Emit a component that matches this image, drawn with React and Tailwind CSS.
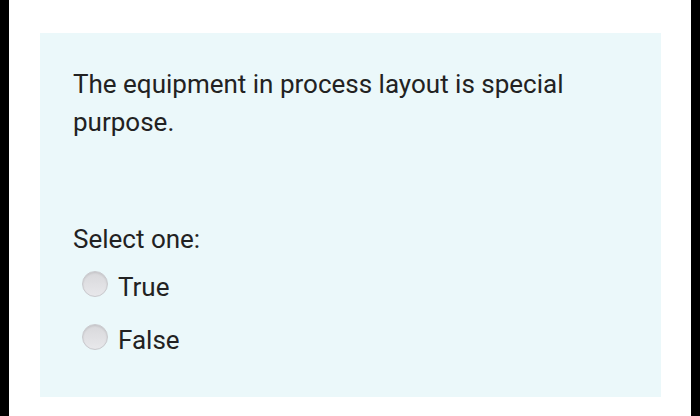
export default function App() {
    const options = ["True", "False"];
    return (
        <div className="w-[700px] h-[416px] bg-black flex" style={{ fontFamily: "Roboto, 'Liberation Sans', sans-serif" }}>
            <div className="ml-[9px] w-[682px] h-full bg-white pt-[33px] pl-[31px]">
                <div className="w-[621px] h-[364px] bg-[#ebf8fa] pl-[33px] pt-[32px] text-[#222]">
                    <p className="text-[26px] leading-[38px] w-[560px]">
                        The equipment in process layout is special purpose.
                    </p>
                    <p className="text-[26px] leading-[38px] mt-[79px]">Select one:</p>
                    <div className="flex flex-col gap-[21px] mt-[13px] pl-[9px]">
                        {options.map((opt) => (
                            <label key={opt} className="flex items-center gap-[10px] text-[26px] leading-[32px]">
                                <span className="w-[26px] h-[26px] mb-[6px] rounded-full bg-gradient-to-b from-[#d8d8db] to-[#e8e8eb] border border-[#c9c9cd] shadow-[inset_0_1px_2px_rgba(0,0,0,0.1)]" />
                                {opt}
                            </label>
                        ))}
                    </div>
                </div>
            </div>
        </div>
    );
}
